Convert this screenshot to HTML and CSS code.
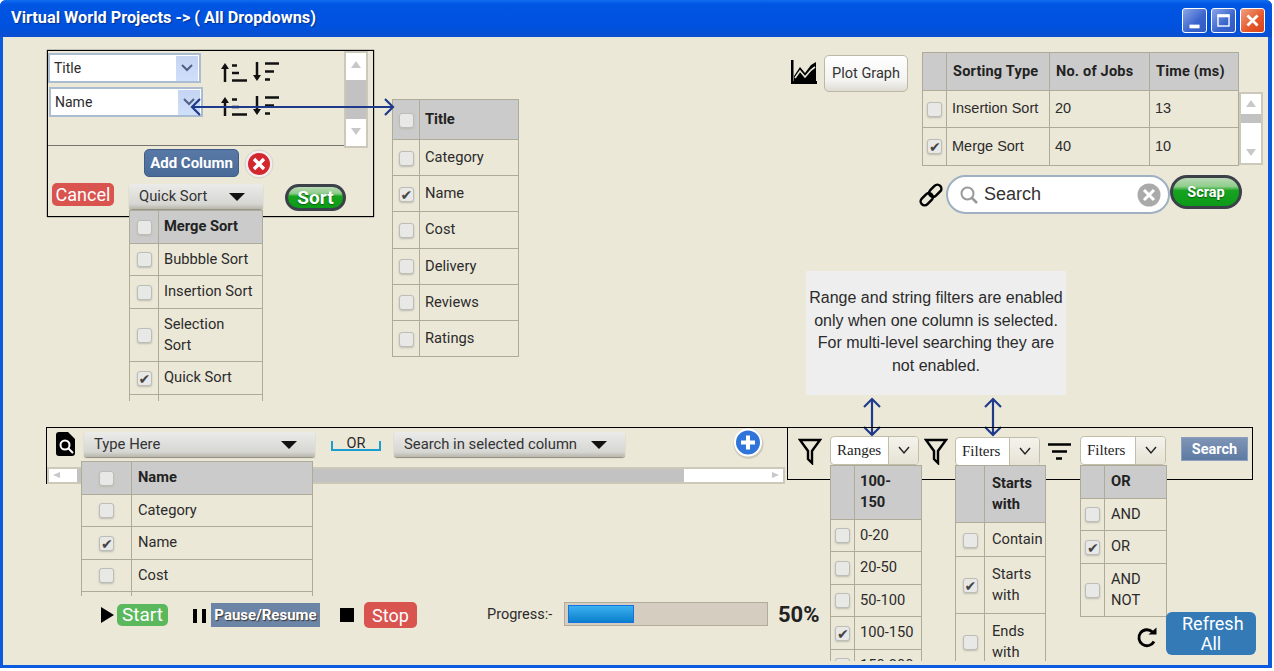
FILE: index.html
```html
<!DOCTYPE html>
<html lang="en">
<head>
  <meta charset="UTF-8" />
  <title>Virtual World Projects</title>
  <link rel="stylesheet" href="styles.css">
</head>
<body>
<div class="window">
  <div class="titlebar">
    <span class="title">Virtual World Projects -&gt; ( All Dropdowns)</span>
    <div class="win-buttons">
      <span class="win-btn"><svg width="25" height="25" viewBox="0 0 25 25"><rect x="7" y="17" width="11" height="4" fill="#fff"/></svg></span>
      <span class="win-btn"><svg width="25" height="25" viewBox="0 0 25 25"><rect x="6.5" y="6.5" width="12" height="12" fill="none" stroke="#fff" stroke-width="1.5"/><rect x="6" y="6" width="13" height="3" fill="#fff"/></svg></span>
      <span class="win-btn win-close"><svg width="25" height="25" viewBox="0 0 25 25"><path d="M7 7l11 11M18 7L7 18" stroke="#fff" stroke-width="3"/></svg></span>
    </div>
  </div>

  <div class="canvas">
    <!-- sort panel -->
    <div class="sort-box"></div>
    <div class="sort-rule"></div>
    <div class="combo combo-title"><span>Title</span><i class="combo-btn"><svg width="14" height="10" viewBox="0 0 14 10"><path d="M2 2l5 5 5-5" fill="none" stroke="#4d6186" stroke-width="2"/></svg></i></div>
    <div class="combo combo-name"><span>Name</span><i class="combo-btn"><svg width="14" height="10" viewBox="0 0 14 10"><path d="M2 2l5 5 5-5" fill="none" stroke="#4d6186" stroke-width="2"/></svg></i></div>
    <svg class="ico sort-a" width="58" height="20" viewBox="0 0 58 20">
      <path d="M4 20V3" stroke="#111" stroke-width="2.500"/><path d="M0 7l4-6 4 6z" fill="#111"/>
      <path d="M11 3.500h5M11 11h7M11 18.500h15" stroke="#111" stroke-width="2.400"/>
      <path d="M36 0v17" stroke="#111" stroke-width="2.500"/><path d="M32 13l4 6 4-6z" fill="#111"/>
      <path d="M44 1.500h14M44 9.500h9M44 17.500h5" stroke="#111" stroke-width="2.400"/>
    </svg>
    <svg class="ico sort-b" width="58" height="20" viewBox="0 0 58 20">
      <path d="M4 20V3" stroke="#111" stroke-width="2.500"/><path d="M0 7l4-6 4 6z" fill="#111"/>
      <path d="M11 3.500h5M11 11h7M11 18.500h15" stroke="#111" stroke-width="2.400"/>
      <path d="M36 0v17" stroke="#111" stroke-width="2.500"/><path d="M32 13l4 6 4-6z" fill="#111"/>
      <path d="M44 1.500h14M44 9.500h9M44 17.500h5" stroke="#111" stroke-width="2.400"/>
    </svg>
    <div class="vscroll vscroll-sort"><b class="up"></b><em></em><b class="down"></b></div>
    <button class="btn-add">Add Column</button>
    <svg class="ico del" width="30" height="30" viewBox="0 0 30 30"><circle cx="15" cy="15" r="14" fill="#f3eeee" stroke="#d5d0c8"/><circle cx="15" cy="15" r="11" fill="#d3262f"/><path d="M10 10l10 10M20 10L10 20" stroke="#fff" stroke-width="3.4"/></svg>
    <button class="btn-cancel">Cancel</button>
    <div class="drop drop-quick"><span>Quick Sort</span><i class="caret"></i></div>
    <button class="pill pill-sort">Sort</button>

    <div class="clip clip-sort">
      <table class="list">
        <tr class="head"><td><i class="check"></i></td><td>Merge Sort</td></tr>
        <tr><td><i class="check"></i></td><td>Bubbble Sort</td></tr>
        <tr><td><i class="check"></i></td><td>Insertion Sort</td></tr>
        <tr><td><i class="check"></i></td><td>Selection<br>Sort</td></tr>
        <tr><td><i class="check on"></i></td><td>Quick Sort</td></tr>
        <tr><td></td><td></td></tr>
      </table>
    </div>

    <table class="list list-cols">
      <tr class="head"><td><i class="check"></i></td><td>Title</td></tr>
      <tr><td><i class="check"></i></td><td>Category</td></tr>
      <tr><td><i class="check on"></i></td><td>Name</td></tr>
      <tr><td><i class="check"></i></td><td>Cost</td></tr>
      <tr><td><i class="check"></i></td><td>Delivery</td></tr>
      <tr><td><i class="check"></i></td><td>Reviews</td></tr>
      <tr><td><i class="check"></i></td><td>Ratings</td></tr>
    </table>

    <svg class="ico arrow-h" width="206" height="18" viewBox="0 0 206 18"><path d="M2 9h201M10 1L2 9l8 8M195 1l8 8-8 8" fill="none" stroke="#1f3a8a" stroke-width="2.200"/></svg>

    <!-- graph and results -->
    <svg class="ico graph" width="26" height="24" viewBox="0 0 26 24"><path d="M0 0h2.500v21H26v3H0z" fill="#000"/><path d="M3 21v-5l6-9 5 6 6-8 5-3v19z" fill="#000"/><path d="M4 18l5-7 5 6 6-7 4-3" fill="none" stroke="#ebe8d8" stroke-width="1.600"/></svg>
    <button class="btn-plot">Plot Graph</button>
    <table class="list list-data">
      <tr class="head"><td></td><td>Sorting Type</td><td>No. of Jobs</td><td>Time (ms)</td></tr>
      <tr><td><i class="check"></i></td><td>Insertion Sort</td><td>20</td><td>13</td></tr>
      <tr><td><i class="check on"></i></td><td>Merge Sort</td><td>40</td><td>10</td></tr>
    </table>
    <div class="vscroll vscroll-data"><b class="up"></b><em></em><b class="down"></b></div>
    <svg class="ico link" width="24" height="24" viewBox="0 0 24 24"><g fill="none" stroke="#000" stroke-width="2.500" transform="rotate(-45 12 12)"><rect x="-1" y="8" width="14" height="8" rx="4"/><rect x="11" y="8" width="14" height="8" rx="4"/></g></svg>
    <div class="searchbox">
      <svg width="20" height="20" viewBox="0 0 20 20"><circle cx="8.500" cy="8.500" r="6" fill="none" stroke="#999" stroke-width="2"/><path d="M13 13l5 5" stroke="#999" stroke-width="2.500"/></svg>
      <span>Search</span>
      <svg class="clear" width="24" height="24" viewBox="0 0 24 24"><circle cx="12" cy="12" r="11.500" fill="#aaa"/><path d="M7 7l10 10M17 7L7 17" stroke="#fff" stroke-width="3"/></svg>
    </div>
    <button class="pill pill-scrap">Scrap</button>

    <!-- note -->
    <div class="note">Range and string filters are enabled only when one column is selected. For multi-level searching they are not enabled.</div>
    <svg class="ico arrow-v1" width="18" height="40" viewBox="0 0 18 40"><path d="M9 2v36M1 10l8-8 8 8M1 30l8 8 8-8" fill="none" stroke="#1f3a8a" stroke-width="2.200"/></svg>
    <svg class="ico arrow-v2" width="18" height="40" viewBox="0 0 18 40"><path d="M9 2v36M1 10l8-8 8 8M1 30l8 8 8-8" fill="none" stroke="#1f3a8a" stroke-width="2.200"/></svg>

    <!-- search bar -->
    <div class="bar-left"></div>
    <div class="bar-right"></div>
    <svg class="ico docsearch" width="19" height="24" viewBox="0 0 19 24"><path d="M3 0h9l7 7v14a3 3 0 0 1-3 3H3a3 3 0 0 1-3-3V3a3 3 0 0 1 3-3z" fill="#000"/><circle cx="9" cy="13" r="4.500" fill="none" stroke="#fff" stroke-width="2"/><path d="M12 16l5 5" stroke="#fff" stroke-width="2"/></svg>
    <div class="drop drop-type"><span>Type Here</span><i class="caret"></i></div>
    <div class="or-link"><span>OR</span></div>
    <div class="drop drop-col"><span>Search in selected column</span><i class="caret"></i></div>
    <svg class="ico plus" width="31" height="31" viewBox="0 0 31 31"><circle cx="15.500" cy="16" r="15" fill="#b9b6a8" opacity=".6"/><circle cx="15" cy="14.500" r="14" fill="#fff"/><circle cx="15" cy="14.500" r="12" fill="#2f74d8"/><path d="M15 7.500v14M8 14.500h14" stroke="#fff" stroke-width="4"/></svg>
    <div class="hscroll"><b class="left"></b><em></em><b class="right"></b></div>

    <svg class="ico funnel funnel-a" width="24" height="27" viewBox="0 0 24 27"><path d="M2 2h20l-8 11v12l-4-4v-8z" fill="none" stroke="#000" stroke-width="2.400"/></svg>
    <div class="split split-ranges"><span>Ranges</span><i><svg width="14" height="9" viewBox="0 0 14 9"><path d="M2 1l5 6 5-6" fill="none" stroke="#222" stroke-width="1.400"/></svg></i></div>
    <svg class="ico funnel funnel-b" width="24" height="27" viewBox="0 0 24 27"><path d="M2 2h20l-8 11v12l-4-4v-8z" fill="none" stroke="#000" stroke-width="2.400"/></svg>
    <div class="split split-filters"><span>Filters</span><i><svg width="14" height="9" viewBox="0 0 14 9"><path d="M2 1l5 6 5-6" fill="none" stroke="#222" stroke-width="1.400"/></svg></i></div>
    <svg class="ico lines" width="23" height="17" viewBox="0 0 23 17"><path d="M0 1.500h23M4 8.500h15M8 15.500h6" stroke="#000" stroke-width="2.400"/></svg>
    <div class="split split-logic"><span>Filters</span><i><svg width="14" height="9" viewBox="0 0 14 9"><path d="M2 1l5 6 5-6" fill="none" stroke="#222" stroke-width="1.400"/></svg></i></div>
    <button class="btn-search">Search</button>

    <div class="clip clip-name">
      <table class="list">
        <tr class="head"><td><i class="check"></i></td><td>Name</td></tr>
        <tr><td><i class="check"></i></td><td>Category</td></tr>
        <tr><td><i class="check on"></i></td><td>Name</td></tr>
        <tr><td><i class="check"></i></td><td>Cost</td></tr>
        <tr><td></td><td></td></tr>
      </table>
    </div>
    <div class="clip clip-ranges">
      <table class="list">
        <tr class="head"><td></td><td>100-<br>150</td></tr>
        <tr><td><i class="check"></i></td><td>0-20</td></tr>
        <tr><td><i class="check"></i></td><td>20-50</td></tr>
        <tr><td><i class="check"></i></td><td>50-100</td></tr>
        <tr><td><i class="check on"></i></td><td>100-150</td></tr>
        <tr><td><i class="check"></i></td><td>150-200</td></tr>
      </table>
    </div>
    <div class="clip clip-filters">
      <table class="list">
        <tr class="head"><td></td><td>Starts<br>with</td></tr>
        <tr><td><i class="check"></i></td><td>Contain</td></tr>
        <tr><td><i class="check on"></i></td><td>Starts<br>with</td></tr>
        <tr><td><i class="check"></i></td><td>Ends<br>with</td></tr>
      </table>
    </div>
    <table class="list list-logic">
      <tr class="head"><td></td><td>OR</td></tr>
      <tr><td><i class="check"></i></td><td>AND</td></tr>
      <tr><td><i class="check on"></i></td><td>OR</td></tr>
      <tr><td><i class="check"></i></td><td>AND<br>NOT</td></tr>
    </table>

    <!-- run controls -->
    <div class="controls">
      <i class="play"></i>
      <button class="btn-start">Start</button>
      <i class="pause"></i>
      <button class="btn-pause">Pause/Resume</button>
      <i class="stop"></i>
      <button class="btn-stop">Stop</button>
    </div>
    <div class="progress">
      <span class="progress-label">Progress:-</span>
      <div class="progress-track"><div class="progress-fill"></div></div>
      <span class="progress-pct">50%</span>
    </div>
    <svg class="ico refresh" width="22" height="22" viewBox="0 0 22 22"><path d="M18 14.500A8 8 0 1 1 16.500 5" fill="none" stroke="#000" stroke-width="2.800"/><path d="M12.500 7.500h8v-7z" fill="#000"/></svg>
    <button class="btn-refresh">Refresh All</button>
  </div>
</div>
</body>
</html>
```

FILE: styles.css
```css
* {
  box-sizing: border-box;
}

html, body {
  margin: 0;
  height: 100%;
  background: #fff;
  overflow: hidden;
}

body {
  font-family: Roboto, "Liberation Sans", sans-serif;
  color: #2b2b2b;
}

button {
  font-family: inherit;
  border: none;
  padding: 0;
}

.window {
  width: 1272px;
  height: 668px;
  display: flex;
  flex-direction: column;
  background: #0a5be0;
  padding: 0 4px 3px 3px;
  border-radius: 6px 6px 0 0;
}

.titlebar {
  height: 37px;
  margin: 0 -4px 0 -3px;
  padding: 0 7px 0 11px;
  display: flex;
  align-items: center;
  justify-content: space-between;
  border-radius: 6px 6px 0 0;
  background: linear-gradient(#0f6cf0 0, #0055e3 12%, #0052de 70%, #0a4fd0 100%);
}

.title {
  color: #fff;
  font-size: 16.300px;
  font-weight: 700;
  text-shadow: 1px 1px 1px #08308c;
  margin-top: -2px;
}

.win-buttons {
  display: flex;
  gap: 4px;
  margin-top: 4px;
}

.win-btn {
  width: 25px;
  height: 25px;
  border: 1px solid #fff;
  border-radius: 3px;
  background: linear-gradient(135deg, #8aa6e8, #3a64cc 60%, #3059c4);
  display: flex;
  align-items: center;
  justify-content: center;
}

.win-close {
  background: linear-gradient(135deg, #f0a080, #e5572a 60%, #d9431a);
}

.canvas {
  position: relative;
  flex: 1;
  background: #ebe8d8;
}

/* everything on the canvas is placed in page coordinates minus 3,37 */
.canvas > * {
  position: absolute;
}

.ico {
  display: block;
}

/* sort panel */
.sort-box {
  left: 44px;
  top: 13px;
  width: 327px;
  height: 167px;
  border: 1px solid #000;
  box-shadow: 0 0 1px #000;
}

.sort-rule {
  left: 45px;
  top: 108px;
  width: 297px;
  height: 1px;
  background: #77756b;
}

.combo {
  display: flex;
  align-items: center;
  justify-content: space-between;
  background: #fff;
  border: 2px solid #a9bcd2;
  font-size: 14px;
  padding: 0 1px 0 4px;
}

.combo-title {
  left: 45px;
  top: 16px;
  width: 153px;
  height: 30px;
}

.combo-name {
  left: 46px;
  top: 50px;
  width: 154px;
  height: 30px;
}

.combo-btn {
  width: 22px;
  height: 25px;
  background: linear-gradient(#c4d4f2, #d0dffa);
  display: flex;
  align-items: center;
  justify-content: center;
}

.sort-a {
  left: 218px;
  top: 25px;
}

.sort-b {
  left: 218px;
  top: 59px;
}

.vscroll {
  display: flex;
  flex-direction: column;
  width: 24px;
  background: #fff;
  border: 2px solid #ccc9bb;
  align-items: stretch;
  justify-content: space-between;
}

.vscroll em {
  flex: 1;
  background: #c2c2c2;
}

.vscroll b {
  height: 26px;
  flex: none;
  display: block;
  position: relative;
}

.vscroll b::after {
  content: "";
  position: absolute;
  left: 5px;
  top: 8px;
  border-left: 5px solid transparent;
  border-right: 5px solid transparent;
}

.vscroll .up::after {
  border-bottom: 7px solid #c8c8c8;
}

.vscroll .down::after {
  border-top: 7px solid #c8c8c8;
}

.vscroll-sort {
  left: 341px;
  top: 14px;
  height: 97px;
}

.vscroll-sort em {
  margin: 0;
  flex: 0 0 39px;
}

.vscroll-data {
  left: 1236px;
  top: 55px;
  height: 73px;
}

.vscroll-data b {
  height: 20px;
}

.vscroll-data b::after {
  top: 6px;
}

.vscroll-data em {
  flex: 0 0 9px;
  margin-bottom: 20px;
}

.btn-add {
  left: 141px;
  top: 112px;
  width: 95px;
  height: 28px;
  border-radius: 5px;
  border: 1px solid #3f5d88;
  background: linear-gradient(#5878a6, #4a6a98);
  color: #fff;
  font-size: 15px;
  font-weight: 700;
}

.del {
  left: 241px;
  top: 112px;
}

.btn-cancel {
  left: 49px;
  top: 146px;
  width: 62px;
  height: 23px;
  border-radius: 5px;
  background: #d9534f;
  color: #fff;
  font-size: 18px;
}

.drop {
  display: flex;
  align-items: center;
  justify-content: space-between;
  height: 25px;
  border-radius: 3px;
  background: linear-gradient(#ebebe9, #d6d6d3 80%, #b9b7aa);
  box-shadow: 0 1px 1px #8e8c80;
  font-size: 14.800px;
  padding: 0 18px 0 10px;
  color: #333;
}

.drop span {
  margin-top: -2px;
}

.caret {
  border-left: 8px solid transparent;
  border-right: 8px solid transparent;
  border-top: 8px solid #111;
}

.drop-quick {
  left: 126px;
  top: 147px;
  width: 134px;
}

.drop-type {
  left: 81px;
  top: 395px;
  width: 231px;
}

.drop-col {
  left: 391px;
  top: 395px;
  width: 231px;
}

.pill {
  color: #fff;
  font-weight: 700;
  border: 3px solid #3c4048;
  border-radius: 16px;
  text-shadow: 0 1px 1px #0b5c10;
  background: linear-gradient(#b9d8b4 0, #8fce8c 30%, #16a31e 45%, #0d9a18 100%);
}

.pill-sort {
  left: 282px;
  top: 147px;
  width: 61px;
  height: 27px;
  font-size: 19px;
  line-height: 18px;
}

.pill-scrap {
  left: 1167px;
  top: 138px;
  width: 72px;
  height: 34px;
  font-size: 14.500px;
  border-radius: 17px;
}

/* lists */
.list {
  border-collapse: collapse;
  table-layout: fixed;
  font-size: 14.700px;
  line-height: 21px;
  background: transparent;
}

.list td {
  border: 1px solid #aeab98;
  padding: 5.250px 0 5.250px 5px;
  vertical-align: middle;
  white-space: nowrap;
}

.list td:first-child {
  padding: 0;
  text-align: center;
}

.list .head td {
  background: #cbcbcb;
  font-weight: 700;
  color: #222;
}

.clip {
  overflow: hidden;
}

.clip .list {
  width: 100%;
}

.check {
  display: inline-block;
  width: 15px;
  height: 15px;
  vertical-align: middle;
  border: 1px solid #bdbdb8;
  border-radius: 3px;
  background: #e8e8e6;
  box-shadow: 0 1px 2px #bdbbae;
  position: relative;
}

.check.on::after {
  content: "✔";
  position: absolute;
  left: 1px;
  top: -2px;
  font: 14px/18px "DejaVu Sans", sans-serif;
  color: #444;
}

.clip-sort {
  left: 126px;
  top: 173px;
  width: 134px;
  height: 191px;
}

.clip-sort td:first-child {
  width: 29px;
}

.list-cols {
  left: 389px;
  top: 62px;
  width: 127px;
}

.list-cols td {
  height: 36.200px;
}

.list-cols td:first-child {
  width: 27px;
}

.list-cols .head td {
  height: 40px;
}

.list-data {
  left: 919px;
  top: 15px;
  width: 317px;
}

.list-data td {
  height: 37.500px;
  font-family: "Liberation Sans", sans-serif;
  font-size: 14.500px;
}

.list-data .head td {
  font-family: Roboto, sans-serif;
  letter-spacing: .2px;
  padding-left: 6px;
}

.list-data td:nth-child(1) {
  width: 24px;
}

.list-data td:nth-child(2) {
  width: 103px;
}

.list-data td:nth-child(3) {
  width: 100px;
}

.btn-plot {
  left: 821px;
  top: 18px;
  width: 84px;
  height: 37px;
  border: 1px solid #bdb8a4;
  border-radius: 5px;
  background: linear-gradient(#fff, #f3f3f1 70%, #dedcd2);
  color: #333;
  font-size: 14.500px;
}

.graph {
  left: 788px;
  top: 23px;
}

.link {
  left: 916px;
  top: 146px;
}

.searchbox {
  left: 943px;
  top: 138px;
  width: 224px;
  height: 39px;
  display: flex;
  align-items: center;
  gap: 5px;
  padding: 0 7px 0 11px;
  border: 2px solid #9fb0c2;
  border-radius: 20px;
  background: #fff;
  font-family: "Liberation Sans", sans-serif;
  font-size: 18px;
  color: #333;
}

.searchbox .clear {
  margin-left: auto;
}

/* note */
.note {
  left: 803px;
  top: 234px;
  width: 260px;
  height: 124px;
  padding: 16px 0 0;
  background: #eeeeee;
  font-family: "Liberation Sans", sans-serif;
  font-size: 16px;
  line-height: 22.500px;
  text-align: center;
}

.arrow-h {
  left: 187px;
  top: 61px;
}

.arrow-v1 {
  left: 860px;
  top: 360px;
}

.arrow-v2 {
  left: 981px;
  top: 360px;
}

/* search bar */
.bar-left {
  left: 43px;
  top: 390px;
  width: 742px;
  height: 57px;
  border: solid #000;
  border-width: 1px 0 0 1px;
}

.bar-right {
  left: 784px;
  top: 390px;
  width: 466px;
  height: 53px;
  border: 1px solid #000;
}

.docsearch {
  left: 53px;
  top: 395px;
}

.or-link {
  left: 328px;
  top: 404px;
  width: 50px;
  height: 10px;
  text-align: center;
  font-size: 14.500px;
  line-height: 18px;
  border: 2px solid #1a9dd0;
  border-top: 0;
}

.or-link span {
  display: block;
  margin-top: -6px;
}

.plus {
  left: 730px;
  top: 391px;
}

.hscroll {
  left: 44px;
  top: 430px;
  width: 738px;
  height: 17px;
  display: flex;
  border: 2px solid #ccc9bb;
  background: #fff;
}

.hscroll em {
  width: 607px;
  background: #c2c2c2;
}

.hscroll b {
  position: relative;
  width: 28px;
}

.hscroll .right {
  flex: 1;
}

.hscroll b::after {
  content: "";
  position: absolute;
  top: 3px;
  border-top: 3px solid transparent;
  border-bottom: 3px solid transparent;
}

.hscroll .left::after {
  left: 4px;
  border-right: 7px solid #c8c8c8;
}

.hscroll .right::after {
  right: 4px;
  border-left: 7px solid #c8c8c8;
}

.funnel-a {
  left: 795px;
  top: 401px;
}

.funnel-b {
  left: 921px;
  top: 401px;
}

.lines {
  left: 1045px;
  top: 406px;
}

.split {
  display: flex;
  height: 29px;
  border: 1px solid #c2bda8;
  border-radius: 4px;
  background: #fff;
  font: 15px "Liberation Serif", serif;
  color: #222;
  overflow: hidden;
}

.split span {
  padding: 0 6px;
  line-height: 27px;
}

.split i {
  flex: 1;
  border-left: 1px solid #c2bda8;
  background: linear-gradient(#f4f3ec, #e6e3d4);
  display: flex;
  align-items: center;
  justify-content: center;
}

.split-ranges {
  left: 827px;
  top: 399px;
  width: 89px;
}

.split-ranges span {
  width: 57px;
}

.split-filters {
  left: 952px;
  top: 400px;
  width: 85px;
}

.split-filters span {
  width: 53px;
}

.split-logic {
  left: 1077px;
  top: 399px;
  width: 86px;
}

.split-logic span {
  width: 54px;
}

.btn-search {
  left: 1178px;
  top: 400px;
  width: 67px;
  height: 24px;
  background: linear-gradient(#7f95b6, #5d7aa3);
  border: 1px solid #8da0bc;
  color: #fff;
  font-size: 14.500px;
  font-weight: 700;
}

.clip-name {
  left: 78px;
  top: 424px;
  width: 232px;
  height: 135px;
}

.clip-name td {
  padding-left: 6px;
}

.clip-name td:first-child {
  width: 50px;
}

.clip-ranges {
  left: 827px;
  top: 428px;
  width: 92px;
  height: 196px;
}

.clip-ranges td:first-child {
  width: 24px;
}

.clip-filters {
  left: 952px;
  top: 428px;
  width: 91px;
  height: 196px;
}

.clip-filters td:first-child {
  width: 29px;
}

.clip-filters td {
  padding: 7px 0 7px 7px;
}

.clip-filters tr:nth-child(2) td {
  padding-top: 6px;
  padding-bottom: 6px;
}

.list-logic {
  left: 1077px;
  top: 428px;
  width: 87px;
}

.list-logic td {
  padding-left: 6px;
}

.list-logic td:first-child {
  width: 24px;
}

/* run controls */
.controls {
  left: 98px;
  top: 565px;
  height: 26px;
  display: flex;
  align-items: center;
}

.play {
  border-left: 13px solid #000;
  border-top: 8px solid transparent;
  border-bottom: 8px solid transparent;
  margin-right: 3px;
}

.btn-start {
  width: 51px;
  height: 22px;
  border-radius: 5px;
  background: #5cb85c;
  color: #fff;
  font-size: 19px;
  line-height: 20px;
}

.pause {
  width: 13px;
  height: 14px;
  margin: 2px 5px 0 25px;
  border-left: 4px solid #000;
  border-right: 4px solid #000;
}

.btn-pause {
  width: 109px;
  height: 24px;
  background: #6c84a5;
  color: #fff;
  font-size: 15px;
  font-weight: 700;
  white-space: nowrap;
  text-shadow: 1px 1px 1px #333;
}

.stop {
  width: 14px;
  height: 14px;
  background: #000;
  margin: 0 10px 0 20px;
}

.btn-stop {
  width: 53px;
  height: 26px;
  border-radius: 5px;
  background: #d9534f;
  color: #fff;
  font-size: 18px;
}

.progress {
  left: 484px;
  top: 565px;
  height: 24px;
  display: flex;
  align-items: center;
  font-size: 14.500px;
}

.progress-label {
  width: 77px;
}

.progress-track {
  width: 204px;
  height: 24px;
  padding: 2px 3px;
  background: #d5cdbf;
  border: 1px solid #b3ab9a;
}

.progress-fill {
  width: 66px;
  height: 100%;
  border: 1px solid #1672e0;
  background: linear-gradient(#3cb0f0, #0a80cc);
}

.progress-pct {
  margin-left: 10px;
  font-size: 22px;
  font-weight: 700;
  color: #222;
}

.refresh {
  left: 1133px;
  top: 590px;
}

.btn-refresh {
  left: 1163px;
  top: 575px;
  width: 90px;
  height: 43px;
  border-radius: 6px;
  background: #337ab7;
  color: #fff;
  font-size: 18px;
  line-height: 20px;
  padding: 0 16px;
}
```
